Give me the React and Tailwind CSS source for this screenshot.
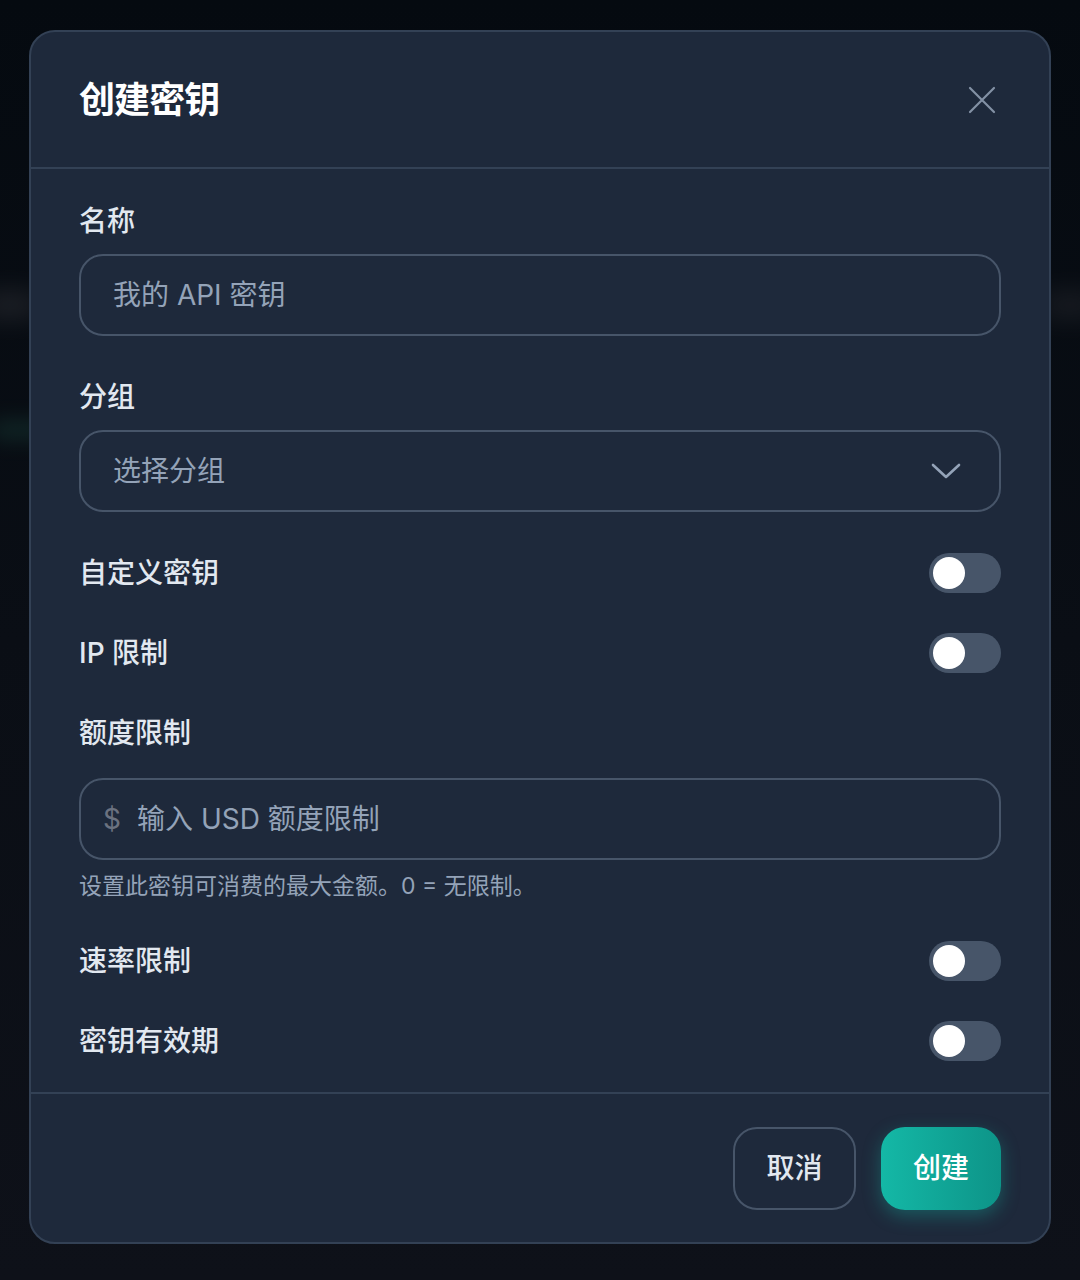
import React, { useState } from 'react';

const FONT = { fontFamily: 'Inter, "Noto Sans CJK SC", "Noto Sans", sans-serif' };

function Toggle({ on, onChange }) {
  return (
    <button
      onClick={() => onChange(!on)}
      className={`relative w-[72px] h-[40px] rounded-full transition-colors ${on ? 'bg-[#14b8a6]' : 'bg-[#475569]'}`}
    >
      <span
        className={`absolute top-[4px] w-[32px] h-[32px] rounded-full bg-white transition-all ${on ? 'left-[36px]' : 'left-[4px]'}`}
      />
    </button>
  );
}

function ToggleRow({ label, on, onChange, className = '' }) {
  return (
    <div className={`h-[40px] flex items-center justify-between ${className}`}>
      <span className="text-[28px] font-medium text-[#e2e8f0]">{label}</span>
      <Toggle on={on} onChange={onChange} />
    </div>
  );
}

export default function App() {
  const [custom, setCustom] = useState(false);
  const [ip, setIp] = useState(false);
  const [rate, setRate] = useState(false);
  const [expiry, setExpiry] = useState(false);

  return (
    <div
      style={FONT}
      className="relative w-full h-[1280px] overflow-hidden bg-gradient-to-b from-[#050a10] via-[#0a0e15] to-[#0e1119] pt-[30px] px-[29px]"
    >
      {/* faint blurred background content */}
      <div className="absolute left-[-20px] top-[290px] w-[60px] h-[30px] rounded-full bg-[#3a3a40] opacity-40 blur-[12px]" />
      <div className="absolute left-[-10px] top-[420px] w-[60px] h-[20px] rounded-full bg-[#1d4a40] opacity-40 blur-[10px]" />
      <div className="absolute right-[-20px] top-[290px] w-[60px] h-[30px] rounded-full bg-[#3a3a40] opacity-30 blur-[12px]" />

      <div className="relative h-[1214px] rounded-[26px] border-2 border-[#334155] bg-[#1e293b] flex flex-col">
        {/* Header */}
        <div className="h-[137px] shrink-0 flex items-center justify-between pl-[48px] pr-[53px] border-b-2 border-[#334155]">
          <h2 className="text-[36px] font-bold text-white tracking-tight">创建密钥</h2>
          <button className="text-[#8391a5]">
            <svg width="28" height="28" viewBox="0 0 28 28" fill="none" stroke="currentColor" strokeWidth="2.2" strokeLinecap="round">
              <path d="M2 2 L26 26 M26 2 L2 26" />
            </svg>
          </button>
        </div>

        {/* Body */}
        <div className="flex-1 px-[48px] pt-[32px]">
          <label className="h-[40px] flex items-center text-[28px] font-medium text-[#e2e8f0]">名称</label>
          <div className="mt-[13px] h-[82px] rounded-[24px] border-2 border-[#475569] flex items-center px-[32px]">
            <span className="text-[28px] text-[#94a3b8]">我的 API 密钥</span>
          </div>

          <label className="mt-[41px] h-[40px] flex items-center text-[28px] font-medium text-[#e2e8f0]">分组</label>
          <div className="mt-[13px] h-[82px] rounded-[24px] border-2 border-[#475569] flex items-center justify-between pl-[32px] pr-[38px]">
            <span className="text-[28px] text-[#94a3b8]">选择分组</span>
            <svg width="30" height="16" viewBox="0 0 30 16" fill="none" stroke="#94a3b8" strokeWidth="2.6" strokeLinecap="round" strokeLinejoin="round">
              <path d="M2 2 L15 14 L28 2" />
            </svg>
          </div>

          <ToggleRow className="mt-[41px]" label="自定义密钥" on={custom} onChange={setCustom} />
          <ToggleRow className="mt-[40px]" label="IP 限制" on={ip} onChange={setIp} />

          <label className="mt-[40px] h-[40px] flex items-center text-[28px] font-medium text-[#e2e8f0]">额度限制</label>
          <div className="mt-[25px] h-[82px] rounded-[24px] border-2 border-[#475569] flex items-center pl-[22px]">
            <span className="text-[28px] text-[#6b7280] w-[34px]">$</span>
            <span className="text-[28px] text-[#94a3b8]">输入 USD 额度限制</span>
          </div>
          <p className="mt-[10px] h-[32px] flex items-center text-[23px] text-[#94a3b8]">设置此密钥可消费的最大金额。0 = 无限制。</p>

          <ToggleRow className="mt-[39px]" label="速率限制" on={rate} onChange={setRate} />
          <ToggleRow className="mt-[40px]" label="密钥有效期" on={expiry} onChange={setExpiry} />
        </div>

        {/* Footer */}
        <div className="h-[150px] shrink-0 border-t-2 border-[#334155] flex items-center justify-end gap-[25px] px-[48px]">
          <button className="w-[123px] h-[83px] rounded-[24px] border-2 border-[#475569] text-[28px] font-medium text-[#e2e8f0]">
            取消
          </button>
          <button className="w-[120px] h-[83px] rounded-[24px] bg-gradient-to-r from-[#14b8a6] to-[#0d9488] text-[28px] font-medium text-white shadow-[0_6px_18px_rgba(20,184,166,0.35)]">
            创建
          </button>
        </div>
      </div>
    </div>
  );
}
